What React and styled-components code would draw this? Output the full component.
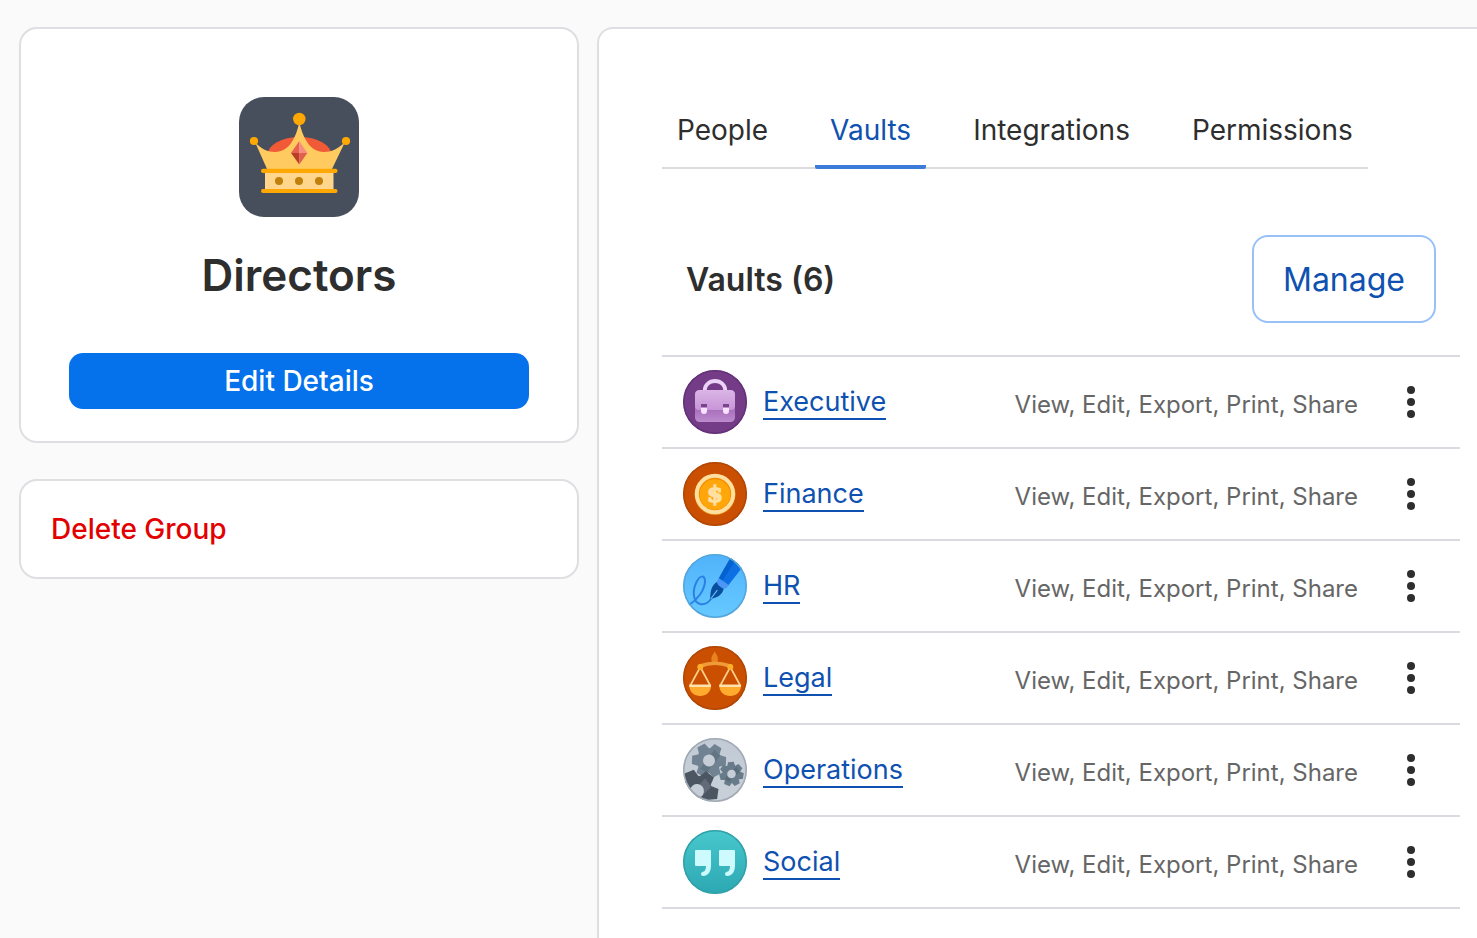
import React from 'react';
import styled, { createGlobalStyle } from 'styled-components';

const GlobalStyle = createGlobalStyle`
    * {
      box-sizing: border-box;
    }
    body {
      margin: 0;
      background: #fafafa;
      color: #2e2e2e;
      font-family: Inter, "Liberation Sans", sans-serif;
    }
    button {
      font-family: inherit;
      cursor: pointer;
    }
`
const Page = styled.div`
    display: grid;
    grid-template-columns: minmax(320px, 560px) 1fr;
    gap: 18px;
    min-height: 100vh;
    padding: 27px 0 0 19px;
`
const Sidebar = styled.aside`
    display: flex;
    flex-direction: column;
    gap: 36px;
`
const Card = styled.section`
    background: white;
    border: 2px solid #dfdfe3;
    border-radius: 18px;
`
const GroupCard = styled(Card)`
    display: flex;
    flex-direction: column;
    align-items: center;
    padding: 68px 48px 32px;
`
const GroupName = styled.h1`
    margin: 26px 0 46px;
    font-size: 44px;
    line-height: 64px;
    font-weight: 600;
`
const EditButton = styled.button`
    width: 100%;
    height: 56px;
    border: 0;
    border-radius: 14px;
    background: #0572ec;
    color: white;
    font-size: 28px;
    font-weight: 500;
`
const DeleteButton = styled.button`
    display: block;
    width: 100%;
    height: 96px;
    padding: 0 30px;
    border: 0;
    background: none;
    color: #e20000;
    font-size: 28px;
    font-weight: 500;
    text-align: left;
`
const Panel = styled.main`
    background: white;
    border: 2px solid #dfdfe3;
    border-width: 2px 0 0 2px;
    border-radius: 16px 0 0 0;
    padding: 66px 17px 28px 63px;
`
const Tabs = styled.nav`
    display: flex;
    gap: 32px;
    width: fit-content;
    box-shadow: inset 0 -2px #dcdcde;
`
const Tab = styled.a`
    padding: 15px;
    border-bottom: 4px solid ${props => props.$active ? '#3b7bd9' : 'transparent'};
    border-radius: 2px;
    color: ${props => props.$active ? '#0f51b0' : '#2e2e2e'};
    font-size: 28px;
    line-height: 40px;
    text-decoration: none;
`
const ListHead = styled.header`
    display: flex;
    align-items: center;
    justify-content: space-between;
    padding: 66px 24px 32px;
`
const ListTitle = styled.h2`
    margin: 0;
    font-size: 32px;
    font-weight: 600;
`
const ManageButton = styled.button`
    height: 88px;
    padding: 0 29px;
    border: 2px solid #98c1f8;
    border-radius: 16px;
    background: white;
    color: #0f51b0;
    font-size: 32px;
    font-weight: 400;
`
const VaultTable = styled.table`
    width: 100%;
    border-collapse: collapse;
`
const VaultRow = styled.tr`
    height: 92px;
    border-top: 2px solid #dadae1;
    border-bottom: 2px solid #dadae1;
`
const Cell = styled.td`
    padding: 0;
`
const VaultCell = styled.div`
    display: flex;
    align-items: center;
    gap: 16px;
    padding-left: 21px;
`
const VaultLink = styled.a`
    padding-top: 2px;
    border-bottom: 2px solid #0f51b0;
    color: #0f51b0;
    font-size: 27px;
    line-height: 32px;
    text-decoration: none;
`
const PermissionCell = styled(Cell)`
    padding: 4px 4px 0 0;
    color: #666;
    font-size: 24px;
    text-align: right;
    white-space: nowrap;
`
const MenuCell = styled(Cell)`
    width: 98px;
    text-align: center;
`
const MenuButton = styled.button`
    display: inline-flex;
    padding: 8px 16px;
    border: 0;
    background: none;
    color: #2e2e2e;
`

const CrownIcon = () => (
    <svg width="120" height="120" viewBox="0 0 120 120" aria-hidden="true">
        <rect width="120" height="120" rx="25" fill="#464f5b" />
        <ellipse cx="60.5" cy="58" rx="32" ry="18" fill="#f05a36" />
        <path d="M16 45C22 52 29 55 36 55C50 55 57 41 60.3 25C64 41 71 55 85 55C92 55 99 52 106 45L93 72H28Z" fill="#ffca5f" />
        <rect x="26" y="74" width="68.5" height="20" fill="#ffd68c" />
        <rect x="22" y="71.7" width="76.5" height="4.2" rx="2" fill="#ffa803" />
        <rect x="22" y="91.9" width="76.5" height="4.2" rx="2" fill="#ffa803" />
        <circle cx="60.3" cy="22" r="6.2" fill="#ffa803" />
        <circle cx="15" cy="44" r="4.1" fill="#ffa803" />
        <circle cx="107" cy="44" r="4.1" fill="#ffa803" />
        <path d="M60.3 44V56H52Z" fill="#e8604f" />
        <path d="M60.3 44L68.3 56H60.3Z" fill="#f78d82" />
        <path d="M52 56H60.3V67.5Z" fill="#b93d28" />
        <path d="M60.3 56H68.3L60.3 67.5Z" fill="#e0604f" />
        <circle cx="40" cy="84" r="4" fill="#c0800b" />
        <circle cx="60" cy="84" r="4" fill="#c0800b" />
        <circle cx="80" cy="84" r="4" fill="#c0800b" />
    </svg>
);

const BriefcaseArt = () => (
    <>
        <defs>
            <linearGradient id="flap" x1="0" y1="0" x2="0" y2="1">
                <stop offset="0" stopColor="#dbb5e6" />
                <stop offset="1" stopColor="#c795d7" />
            </linearGradient>
            <linearGradient id="bag" x1="0" y1="0" x2="0" y2="1">
                <stop offset="0.55" stopColor="#a56cba" />
                <stop offset="1" stopColor="#bd8bce" />
            </linearGradient>
        </defs>
        <path d="M21.8 21V20A10.2 9 0 0 1 42.2 20V21" fill="none" stroke="#edd3f5" strokeWidth="3.8" />
        <rect x="12" y="21" width="40" height="31" rx="4.5" fill="url(#bag)" />
        <path d="M12 24.5Q12 20 16.5 20H47.5Q52 20 52 24.5V36Q52 40 48 40H16Q12 40 12 36Z" fill="url(#flap)" />
        <path d="M18 34H24V38H18ZM40 34H46V38H40Z" fill="#7c428f" />
        <path d="M18 37.5H24V41A3 3 0 0 1 18 41ZM40 37.5H46V41A3 3 0 0 1 40 41Z" fill="#f9e2ff" />
    </>
);

const CoinArt = () => (
    <>
        <circle cx="32" cy="32.5" r="20.5" fill="#e8850c" />
        <circle cx="32" cy="32" r="20.2" fill="#ffdf9e" />
        <circle cx="32" cy="32" r="16.2" fill="#f28b02" />
        <circle cx="32" cy="32.5" r="15.3" fill="#ffa70a" />
        <text x="32" y="40" textAnchor="middle" fontFamily="DejaVu Serif, serif" fontWeight="700" fontSize="23" fill="#ffe0a3" stroke="#ffe0a3" strokeWidth="1.4">$</text>
    </>
);

const PenArt = () => (
    <>
        <path d="M6 51C14 46 22 36 22 27C22 21 17 21 13.5 28C9 37 10 48 17 50C21.5 51 25 49 28 45" fill="none" stroke="#2b80e6" strokeWidth="2" strokeLinecap="round" />
        <path d="M27 45.5C27.5 40 27 33 33.5 28L40.8 34.5C39 42 34 43 27 45.5Z" fill="#084f9e" />
        <path d="M28 44.5L34 36.5" stroke="#6cc2fc" strokeWidth="1.2" strokeLinecap="round" />
        <path d="M36 23.5L46 31L43.5 34Q41 35.5 37.5 33T34 27.5Z" fill="#4c96f5" />
        <path d="M36 24L49 1L62 10L45.5 31Z" fill="#0d6fe4" />
        <path d="M49 1L36 24L39.5 26.5L54 4Z" fill="#0561ce" />
    </>
);

const ScalesArt = () => (
    <>
        <path d="M31.7 5.5C33 8 35 10 35 13Q35 16 33.5 17H30Q28.3 16 28.3 13C28.3 10 30.5 8 31.7 5.5Z" fill="#e8821f" />
        <path d="M17 20Q32 14.5 47 20" fill="none" stroke="#f09b38" strokeWidth="3.6" strokeLinecap="round" />
        <path d="M7 40L17.3 21L27.5 40M37 40L47.3 21L57.5 40" fill="none" stroke="#ffd18a" strokeWidth="1.7" />
        <circle cx="17.3" cy="21" r="3" fill="#ffae2b" />
        <circle cx="47.3" cy="21" r="3" fill="#ffae2b" />
        <path d="M6.3 39.5H28C28 46 23 50 17.2 50S6.3 46 6.3 39.5ZM36.3 39.5H58C58 46 53 50 47.2 50S36.3 46 36.3 39.5Z" fill="#ffab2d" />
        <path d="M6.3 38.5H28V41H6.3ZM36.3 38.5H58V41H36.3Z" fill="#ffe2ac" />
    </>
);

const Gear = ({ cx, cy, r, hole, teeth, turn, color, shade }) => (
    <g transform={`translate(${cx} ${cy}) rotate(${turn})`}>
        {Array.from({ length: teeth }, (_, i) => (
            <path
                key={i}
                d={`M${r * 0.6} ${-r * 0.34}L${r} ${-r * 0.24}V${r * 0.24}L${r * 0.6} ${r * 0.34}Z`}
                transform={`rotate(${i * 360 / teeth})`}
                fill={color}
            />
        ))}
        <circle r={r * 0.72} fill={color} />
        <path d={`M${-r * 0.5} ${r * 0.5}L${r * 0.3} ${-r * 0.65}L${r * 0.65} ${-r * 0.3}L${-r * 0.1} ${r * 0.7}Z`} fill={shade} />
        <circle r={hole} fill="#c5cdd7" />
    </g>
);

const GearsArt = () => (
    <>
        <Gear cx={26} cy={22.5} r={17} hole={6} teeth={6} turn={2} color="#718392" shade="#627583" />
        <Gear cx={48.5} cy={36} r={12} hole={4.3} teeth={7} turn={10} color="#687b8a" shade="#5b6d7b" />
        <Gear cx={14} cy={53} r={21} hole={7} teeth={6} turn={8} color="#4c5562" shade="#626a79" />
    </>
);

const QuoteArt = () => (
    <>
        <path d="M13 20H27Q28 20 28 21V35C28 42 25 46 20 46Q18 46 18 44T20 41.8Q23 41 23 36H13Q12 36 12 35V21Q12 20 13 20Z" fill="#cdfafd" />
        <path d="M37 20H51Q52 20 52 21V35C52 42 49 46 44 46Q42 46 42 44T44 41.8Q47 41 47 36H37Q36 36 36 35V21Q36 20 37 20Z" fill="#cdfafd" />
    </>
);

const VaultIcon = ({ id, top, bottom, edge, children }) => (
    <svg width="64" height="64" viewBox="0 0 64 64" aria-hidden="true">
        <defs>
            <linearGradient id={`${id}-fill`} x1="0" y1="0" x2="0" y2="1">
                <stop offset="0" stopColor={top} />
                <stop offset="1" stopColor={bottom} />
            </linearGradient>
            <clipPath id={`${id}-clip`}>
                <circle cx="32" cy="32" r="32" />
            </clipPath>
        </defs>
        <g clipPath={`url(#${id}-clip)`}>
            <circle cx="32" cy="32" r="32" fill={`url(#${id}-fill)`} />
            {children}
        </g>
        <circle cx="32" cy="32" r="31.2" fill="none" stroke={edge} strokeWidth="1.6" />
    </svg>
);

const KebabIcon = () => (
    <svg width="8" height="32" viewBox="0 0 8 32" fill="currentColor" aria-hidden="true">
        <circle cx="4" cy="4" r="4" />
        <circle cx="4" cy="16" r="4" />
        <circle cx="4" cy="28" r="4" />
    </svg>
);

const tabs = ['People', 'Vaults', 'Integrations', 'Permissions'];

const vaults = [
    { name: 'Executive', top: '#743b87', bottom: '#743b87', edge: '#65327a', Art: BriefcaseArt },
    { name: 'Finance', top: '#cb4f00', bottom: '#cb4f00', edge: '#b14807', Art: CoinArt },
    { name: 'HR', top: '#50b3fb', bottom: '#67c9ff', edge: '#55a6dc', Art: PenArt },
    { name: 'Legal', top: '#cb4f00', bottom: '#cb4f00', edge: '#b14807', Art: ScalesArt },
    { name: 'Operations', top: '#c1cad5', bottom: '#c9d0d9', edge: '#a1aab3', Art: GearsArt },
    { name: 'Social', top: '#48c8cd', bottom: '#2ca8b2', edge: '#32a1a9', Art: QuoteArt },
];

const renderVault = ({ name, Art, ...colors }) => (
    <VaultRow key={name}>
        <Cell>
            <VaultCell>
                <VaultIcon id={name} {...colors}><Art /></VaultIcon>
                <VaultLink href={`#${name}`}>{name}</VaultLink>
            </VaultCell>
        </Cell>
        <PermissionCell>View, Edit, Export, Print, Share</PermissionCell>
        <MenuCell>
            <MenuButton type="button" aria-label={`${name} options`}><KebabIcon /></MenuButton>
        </MenuCell>
    </VaultRow>
);

const App = () => (
    <>
        <GlobalStyle />
        <Page>
            <Sidebar>
                <GroupCard>
                    <CrownIcon />
                    <GroupName>Directors</GroupName>
                    <EditButton type="button">Edit Details</EditButton>
                </GroupCard>
                <Card>
                    <DeleteButton type="button">Delete Group</DeleteButton>
                </Card>
            </Sidebar>
            <Panel>
                <Tabs>
                    {tabs.map((tab) =>
                        <Tab key={tab} href={`#${tab}`} $active={tab === 'Vaults'}>{tab}</Tab>
                    )}
                </Tabs>
                <ListHead>
                    <ListTitle>Vaults ({vaults.length})</ListTitle>
                    <ManageButton type="button">Manage</ManageButton>
                </ListHead>
                <VaultTable>
                    <tbody>
                        {vaults.map(renderVault)}
                    </tbody>
                </VaultTable>
            </Panel>
        </Page>
    </>
);

export default App;
